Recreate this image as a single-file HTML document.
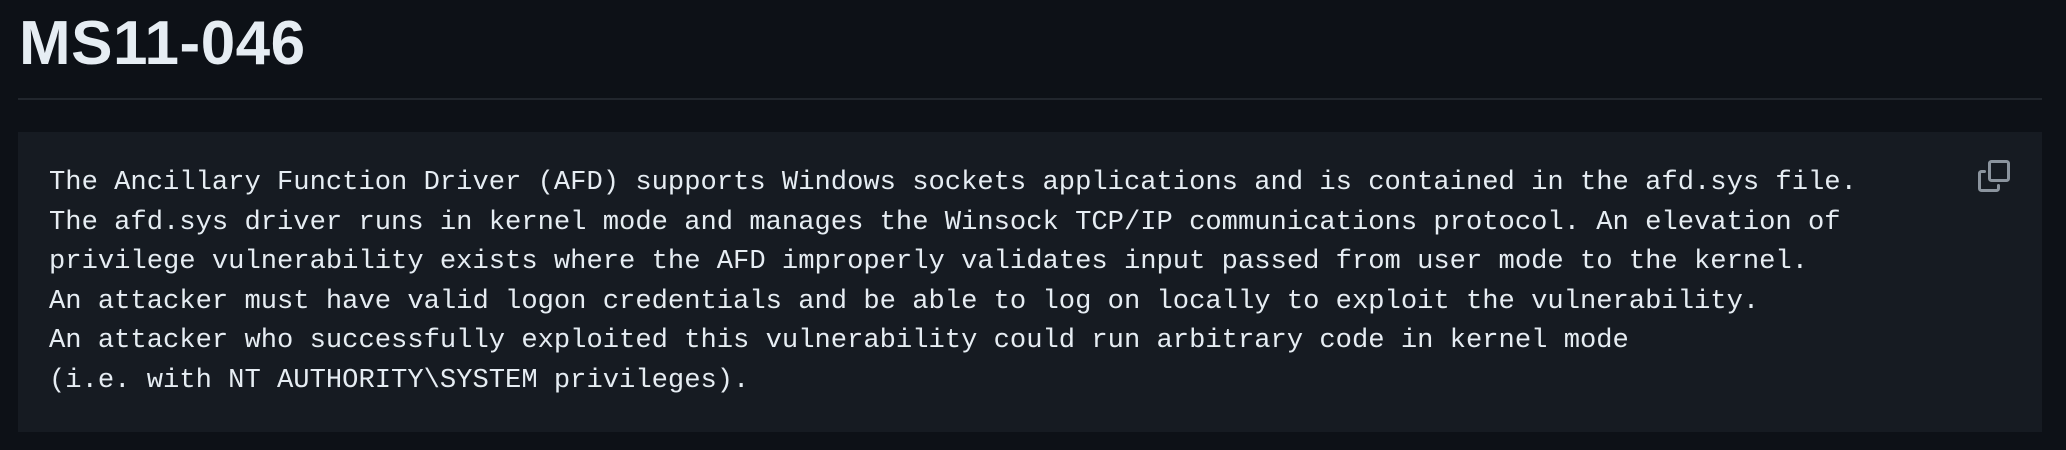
<!DOCTYPE html>
<html><head><meta charset="utf-8"><style>
html,body{margin:0;padding:0;background:#0d1117;width:2066px;height:450px;overflow:hidden}
h1{position:absolute;left:19px;top:13px;margin:0;font:bold 62px/1 "Liberation Sans",sans-serif;color:#e6edf3;letter-spacing:0.5px}
.hr{position:absolute;left:18px;top:98px;width:2024px;height:2px;background:#21262d}
.box{position:absolute;left:18px;top:132px;width:2024px;height:300px;background:#161b22}
pre{position:absolute;left:49px;top:163px;margin:0;font:27.15px/39.5px "Liberation Mono",monospace;color:#e6edf3;white-space:pre}
svg{position:absolute;left:1978px;top:160px}
</style></head><body>
<h1>MS11-046</h1>
<div class="hr"></div>
<div class="box"></div>
<pre>The Ancillary Function Driver (AFD) supports Windows sockets applications and is contained in the afd.sys file.
The afd.sys driver runs in kernel mode and manages the Winsock TCP/IP communications protocol. An elevation of
privilege vulnerability exists where the AFD improperly validates input passed from user mode to the kernel.
An attacker must have valid logon credentials and be able to log on locally to exploit the vulnerability.
An attacker who successfully exploited this vulnerability could run arbitrary code in kernel mode
(i.e. with NT AUTHORITY\SYSTEM privileges).</pre>
<svg width="32" height="32" viewBox="0 0 16 16" fill="#8b949e"><path d="M0 6.75C0 5.784.784 5 1.75 5h1.5a.75.75 0 0 1 0 1.5h-1.5a.25.25 0 0 0-.25.25v7.5c0 .138.112.25.25.25h7.5a.25.25 0 0 0 .25-.25v-1.5a.75.75 0 0 1 1.5 0v1.5A1.75 1.75 0 0 1 9.25 16h-7.5A1.75 1.75 0 0 1 0 14.25Z"/><path d="M5 1.75C5 .784 5.784 0 6.75 0h7.5C15.216 0 16 .784 16 1.75v7.5A1.75 1.75 0 0 1 14.25 11h-7.5A1.75 1.75 0 0 1 5 9.25Zm1.75-.25a.25.25 0 0 0-.25.25v7.5c0 .138.112.25.25.25h7.5a.25.25 0 0 0 .25-.25v-7.5a.25.25 0 0 0-.25-.25Z"/></svg>
</body></html>
